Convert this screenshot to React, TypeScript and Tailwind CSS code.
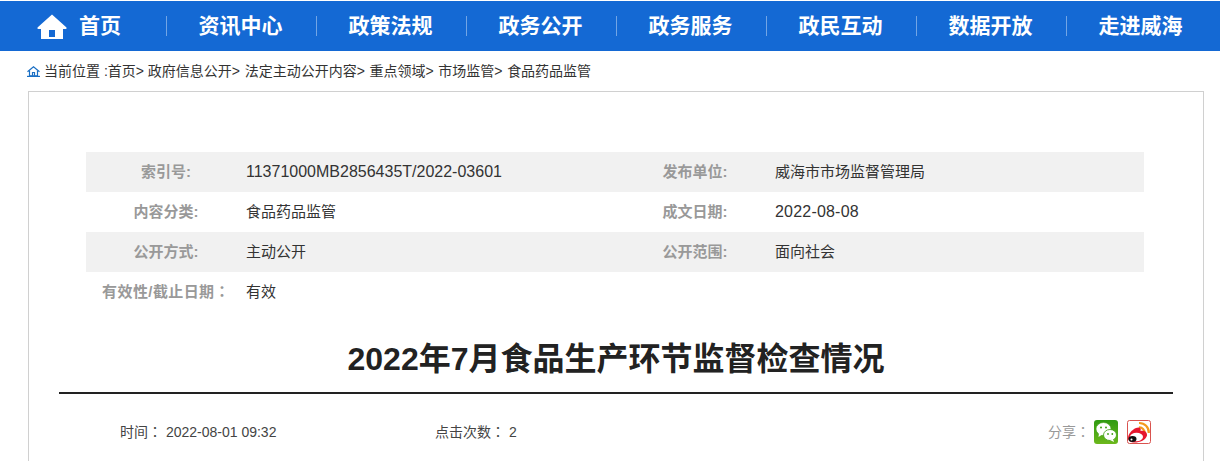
import React from 'react';

const FONT = "font-['Liberation_Sans','Noto_Sans_CJK_SC',sans-serif]";

const NAV_ITEMS = ['资讯中心', '政策法规', '政务公开', '政务服务', '政民互动', '数据开放', '走进威海'];

const BREADCRUMB = ['政府信息公开', '法定主动公开内容', '重点领域', '市场监管'];

const META = [
  { label: '索引号:', value: '11371000MB2856435T/2022-03601', label2: '发布单位:', value2: '威海市市场监督管理局', shaded: true },
  { label: '内容分类:', value: '食品药品监管', label2: '成文日期:', value2: '2022-08-08', shaded: false },
  { label: '公开方式:', value: '主动公开', label2: '公开范围:', value2: '面向社会', shaded: true },
  { label: '有效性/截止日期', value: '有效', label2: '', value2: '', shaded: false, wideColon: true },
];

// the reference draws its full-width colon centred in the cell, as the TC glyph does
const Colon = () => <span className="font-['Noto_Sans_CJK_TC',sans-serif]">：</span>;

const valueSize = (v: string) => (/^\d/.test(v) ? 'text-[16px]' : 'text-[15px]');

const HomeIcon = () => (
  <svg width="30" height="26" viewBox="0 0 30 26" className="mt-px shrink-0">
    <path fill="#fff" d="M15 0.5 L29.5 13.5 Q30 15 28.5 15 L26 15 L26 25 L4 25 L4 15 L1.5 15 Q0 15 0.5 13.5 Z" />
    <rect x="12" y="16" width="6" height="7" fill="#1469d4" />
  </svg>
);

const CrumbIcon = () => (
  <svg width="13" height="11" viewBox="0 0 13 11" fill="none" stroke="#1a6fc4" strokeWidth="1.2" className="shrink-0">
    <path d="M0.5 5.8 L6.5 0.8 L12.5 5.8" />
    <path d="M2.5 4.5 V9.8 H10.5 V4.5" />
    <path d="M5.5 9.8 V6.5 H7.5 V9.8" />
    <path d="M0 10.4 H13" />
  </svg>
);

const WechatIcon = () => (
  <svg width="24" height="24" viewBox="0 0 24 24">
    <defs>
      <linearGradient id="wx" x1="0" y1="0" x2="0" y2="1">
        <stop offset="0" stopColor="#2f9a12" />
        <stop offset="1" stopColor="#6cb81c" />
      </linearGradient>
    </defs>
    <rect width="24" height="24" rx="3" fill="url(#wx)" />
    <ellipse cx="9.5" cy="9" rx="7.5" ry="6.5" fill="#fff" stroke="#3f9f14" strokeWidth="0.6" />
    <path d="M5 13 L4.5 17 L9 14 Z" fill="#fff" />
    <ellipse cx="16" cy="15" rx="6.5" ry="5.5" fill="#fff" stroke="#3f9f14" strokeWidth="0.8" />
    <path d="M19 19 L20 22 L16 20 Z" fill="#fff" />
    <circle cx="7" cy="7.5" r="1" fill="#3f9f14" />
    <circle cx="12" cy="7.5" r="1" fill="#3f9f14" />
    <circle cx="14" cy="14" r="0.9" fill="#3f9f14" />
    <circle cx="18.3" cy="14" r="0.9" fill="#3f9f14" />
  </svg>
);

const WeiboIcon = () => (
  <svg width="24" height="24" viewBox="0 0 24 24">
    <rect x="0.5" y="0.5" width="23" height="23" rx="2" fill="#fff" stroke="#d9534f" />
    <path d="M12 3 A9.5 9.5 0 0 1 21.8 13" fill="none" stroke="#f39a1e" strokeWidth="2.2" />
    <path d="M12 7.5 A5 5 0 0 1 17.5 13" fill="none" stroke="#f39a1e" strokeWidth="2.2" />
    <path fill="#e6162d" d="M9 8 C12.5 6.5 14.5 8 13.5 11 C17 10 20.5 12 20 15.5 C19 20 13 22.5 7.5 22.5 C3.5 22.5 1 20.5 1 18 C1 14.5 4.5 10 9 8 Z" />
    <ellipse cx="9.5" cy="17" rx="6.5" ry="4.2" fill="#fff" />
    <ellipse cx="5.5" cy="19" rx="4" ry="3" fill="#111" />
    <circle cx="4.5" cy="19.5" r="1" fill="#fff" />
  </svg>
);

export default function App() {
  return (
    <div className={`${FONT} flex h-[461px] w-[1220px] flex-col overflow-hidden bg-white pt-px text-[14px] text-[#333]`}>
      <nav className="flex h-[50px] shrink-0 items-center bg-[#1469d4] pl-4 text-[21px] font-bold text-white">
        <div className="flex w-[150px] items-center gap-3 pl-[21px]">
          <HomeIcon />
          <span>首页</span>
        </div>
        {NAV_ITEMS.map((item) => (
          <div key={item} className="flex h-5 w-[150px] items-center justify-center border-l border-white/40 pr-0.5">
            {item}
          </div>
        ))}
      </nav>

      <div className="flex h-10 shrink-0 items-center gap-1 pl-[27px]">
        <CrumbIcon />
        <span className="whitespace-pre">
          {'当前位置 :首页> '}
          <span className="[word-spacing:0.75px]">{BREADCRUMB.map((c) => `${c}> `).join('')}</span>
          食品药品监管
        </span>
      </div>

      <div className="ml-7 h-[400px] w-[1176px] shrink-0 border border-[#d0d0d0] px-[30px] pt-[60px]">
        <div className="ml-[27px] w-[1058px]">
          {META.map((row) => (
            <div
              key={row.label}
              className={`grid h-10 grid-cols-[160px_369px_160px_369px] items-center ${row.shaded ? 'bg-[#f1f1f1]' : ''}`}
            >
              <div className={`text-center text-[15px] font-bold whitespace-nowrap text-[#999] ${row.wideColon ? 'tracking-[0.4px]' : ''}`}>
                {row.label}
                {row.wideColon && <Colon />}
              </div>
              <div className={valueSize(row.value)}>{row.value}</div>
              <div className="text-center text-[15px] font-bold text-[#999]">{row.label2}</div>
              <div className={`${valueSize(row.value2)} ${row.value2.startsWith('2022') ? 'tracking-[0.2px]' : ''}`}>{row.value2}</div>
            </div>
          ))}
        </div>

        <h1 className="mt-[29px] text-center text-[32px] leading-[37px] font-bold text-[#222]">
          2022年7月食品生产环节监督检查情况
        </h1>
        <div className="mt-[14px] border-t-2 border-[#222]" />

        <div className="mt-[26px] flex items-center pl-[61px] text-[#444]">
          <span className="w-[315px]">
            时间<Colon /> 2022-08-01 09:32
          </span>
          <span>
            点击次数<Colon /> 2
          </span>
          <div className="ml-auto flex items-center pr-[22px]">
            <span className="mr-1 text-[#999]">
              分享<Colon />
            </span>
            <div className="flex items-center gap-[9px]">
              <WechatIcon />
              <WeiboIcon />
            </div>
          </div>
        </div>
      </div>
    </div>
  );
}
